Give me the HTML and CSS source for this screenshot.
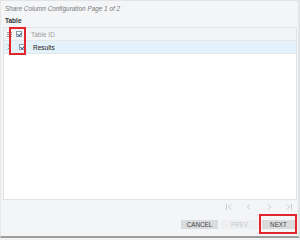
FILE: index.html
```html
<!DOCTYPE html>
<html lang="en">
<head>
  <meta charset="UTF-8">
  <title>Share Column Configuration</title>
  <link rel="stylesheet" href="styles.css">
</head>
<body>
  <div class="dialog">
    <div class="title">Share Column Configuration Page 1 of 2</div>
    <div class="section">Table</div>
    <div class="table">
      <div class="row head">
        <span class="lead">
          <svg width="5" height="5" viewBox="0 0 5 5"><path d="M0 0.5H5M0 2.5H5M0 4.5H5" stroke="#9a9a9a" stroke-width="1"/></svg>
        </span>
        <span class="check"></span>
        <span class="cell muted">Table ID</span>
      </div>
      <div class="row selected">
        <span class="lead">
          <svg width="4" height="6" viewBox="0 0 4 6"><path d="M0.8 0.5L3.2 3L0.8 5.5" fill="none" stroke="#777" stroke-width="0.9"/></svg>
        </span>
        <span class="check"></span>
        <span class="cell">Results</span>
      </div>
    </div>
    <div class="pager">
      <svg width="6" height="6" viewBox="0 0 6 6"><path d="M0.5 0V6M5 0.5L2.5 3L5 5.5" fill="none" stroke="#bdbdbd" stroke-width="0.8"/></svg>
      <svg width="6" height="6" viewBox="0 0 6 6"><path d="M4 0.5L1.5 3L4 5.5" fill="none" stroke="#bdbdbd" stroke-width="0.8"/></svg>
      <svg width="6" height="6" viewBox="0 0 6 6"><path d="M2 0.5L4.5 3L2 5.5" fill="none" stroke="#bdbdbd" stroke-width="0.8"/></svg>
      <svg width="6" height="6" viewBox="0 0 6 6"><path d="M5.5 0V6M1 0.5L3.5 3L1 5.5" fill="none" stroke="#bdbdbd" stroke-width="0.8"/></svg>
    </div>
    <div class="actions">
      <button class="btn">CANCEL</button>
      <button class="btn disabled">PREV</button>
      <button class="btn next">NEXT</button>
    </div>
    <div class="mark mark-check"></div>
    <div class="mark mark-next"></div>
  </div>
</body>
</html>
```

FILE: styles.css
```css
html, body {
  margin: 0;
  padding: 0;
  background-color: #f2f3f5;
}

body {
  width: 300px;
  height: 240px;
  font-family: "Liberation Sans", Arial, sans-serif;
}

.dialog {
  position: relative;
  box-sizing: border-box;
  width: 300px;
  height: 238px;
  background-color: #f4f5f7;
  border-top: 1px solid #e3e4e6;
  border-left: 1px solid #e6e7e9;
  border-right: 2px solid #e3e4e6;
  border-bottom: 2px solid #9d9d9d;
  padding: 0 1px 0 2px;
  display: flex;
  flex-direction: column;
}

.title {
  padding: 2px 0 0 2px;
  font-size: 6.4px;
  line-height: 12px;
  font-style: italic;
  color: #7a7a7a;
}

.section {
  padding-left: 2px;
  font-size: 6.5px;
  line-height: 12px;
  font-weight: bold;
  color: #333;
}

.table {
  flex: 1;
  background-color: #fff;
  border: 1px solid #e2e3e5;
}

.row {
  display: flex;
  align-items: center;
  height: 12px;
  border-bottom: 1px solid #e6e7e9;
  font-size: 6.5px;
}

.row.head {
  background-color: #f3f4f6;
}

.row.selected {
  background-color: #e3f1fa;
  color: #222;
}

.lead {
  width: 8px;
  display: flex;
  justify-content: center;
  padding-left: 1px;
}

.check {
  box-sizing: border-box;
  width: 6px;
  height: 6px;
  margin-left: 3px;
  border: 1px solid #8a9bb0;
  background-color: #fff;
  position: relative;
}

.selected .check {
  margin-left: 6px;
}

.check:after {
  content: "";
  position: absolute;
  left: 1px;
  top: 0;
  width: 2px;
  height: 3px;
  border-right: 1px solid #3a5f8a;
  border-bottom: 1px solid #3a5f8a;
  transform: rotate(40deg);
}

.cell {
  margin-left: 9px;
}

.muted {
  color: #a0a0a0;
}

.selected .cell {
  margin-left: 8px;
}

.pager {
  height: 13px;
  display: flex;
  align-items: center;
  justify-content: flex-end;
  gap: 14px;
  padding-right: 5px;
}

.actions {
  height: 23px;
  box-sizing: border-box;
  display: flex;
  justify-content: flex-end;
  align-items: flex-start;
  padding: 7px 2px 0 0;
}

.btn {
  width: 37px;
  height: 9px;
  margin-left: 3px;
  padding: 0;
  border: 0;
  border-radius: 0;
  background-color: #dadbdd;
  font-family: "Liberation Sans", Arial, sans-serif;
  font-size: 6.3px;
  line-height: 9px;
  color: #444;
}

.btn.disabled {
  background-color: #eeeff1;
  color: #c9c9c9;
}

.btn.next {
  width: 33px;
  margin-left: 4px;
}

/* red annotation boxes */
.mark {
  position: absolute;
  box-sizing: border-box;
  border: 2px solid #e3262b;
}

.mark-check {
  left: 8px;
  top: 26px;
  width: 17px;
  height: 28px;
}

.mark-next {
  left: 258px;
  top: 213px;
  width: 38px;
  height: 20px;
}
```
